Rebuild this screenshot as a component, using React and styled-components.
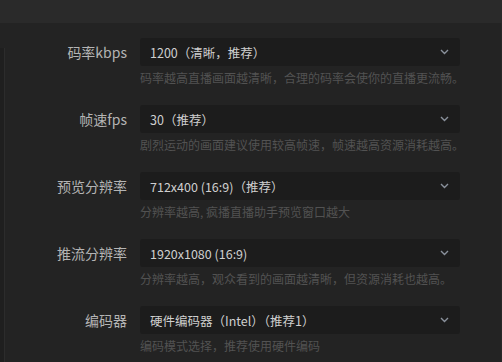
import React from "react";
import styled, { createGlobalStyle } from "styled-components";

const Global = createGlobalStyle`
  html, body { margin: 0; padding: 0; background: #232323; }
  body { width: 502px; height: 362px; overflow: hidden; font-family: "Microsoft YaHei", "Noto Sans CJK SC", "Noto Sans", sans-serif; }
`;

const Page = styled.div`
  width: 502px;
  height: 362px;
  display: flex;
  flex-direction: column;
  background: #232323;
`;

const TopBar = styled.div`
  height: 23px;
  flex: none;
  background: #2a2a2a;
`;

const Body = styled.div`
  flex: 1;
  display: flex;
  border-right: 1px solid #282828;
`;

const SideStrip = styled.div`
  width: 4px;
  margin-top: 25px;
  flex: none;
  background: #1f1f1f;
  border-right: 1px solid #2c2c2c;
`;

const Form = styled.div`
  display: flex;
  flex-direction: column;
  padding-top: 15px;
  margin-left: -5px;
`;

const Row = styled.div`
  display: grid;
  grid-template-columns: 127px 320px;
  column-gap: 13px;
  grid-template-rows: 28px auto;
  height: 67px;
`;

const Label = styled.div`
  grid-column: 1;
  grid-row: 1;
  display: flex;
  align-items: center;
  justify-content: flex-end;
  font-size: 14px;
  color: #b4b4b4;
  white-space: nowrap;
`;

const Select = styled.div`
  grid-column: 2;
  grid-row: 1;
  display: flex;
  align-items: center;
  justify-content: space-between;
  background: #1c1c1c;
  border-radius: 3px;
  padding: 0 11px 0 10px;
  font-size: 12.5px;
  color: #cfcfcf;
  white-space: nowrap;
`;

const Chevron = styled.svg`
  width: 9px;
  height: 6px;
  flex: none;
`;

const Hint = styled.div`
  grid-column: 2;
  grid-row: 2;
  margin-top: 3px;
  font-size: 12px;
  line-height: 18px;
  color: #525252;
  white-space: nowrap;
`;

const rows = [
  ["码率kbps", "1200（清晰，推荐）", "码率越高直播画面越清晰，合理的码率会使你的直播更流畅。"],
  ["帧速fps", "30（推荐）", "剧烈运动的画面建议使用较高帧速，帧速越高资源消耗越高。"],
  ["预览分辨率", "712x400 (16:9)（推荐）", "分辨率越高, 疯播直播助手预览窗口越大"],
  ["推流分辨率", "1920x1080 (16:9)", "分辨率越高，观众看到的画面越清晰，但资源消耗也越高。"],
  ["编码器", "硬件编码器（Intel）（推荐1）", "编码模式选择，推荐使用硬件编码"],
];

export default function App() {
  return (
    <Page>
      <Global />
      <TopBar />
      <Body>
        <SideStrip />
        <Form>
          {rows.map(([l, v, h]) => (
            <Row key={l}>
              <Label>{l}</Label>
              <Select>
                <span>{v}</span>
                <Chevron viewBox="0 0 9 6">
                  <path d="M1 1 L4.5 4.5 L8 1" fill="none" stroke="#8a919c" strokeWidth="1.4" />
                </Chevron>
              </Select>
              <Hint>{h}</Hint>
            </Row>
          ))}
        </Form>
      </Body>
    </Page>
  );
}
